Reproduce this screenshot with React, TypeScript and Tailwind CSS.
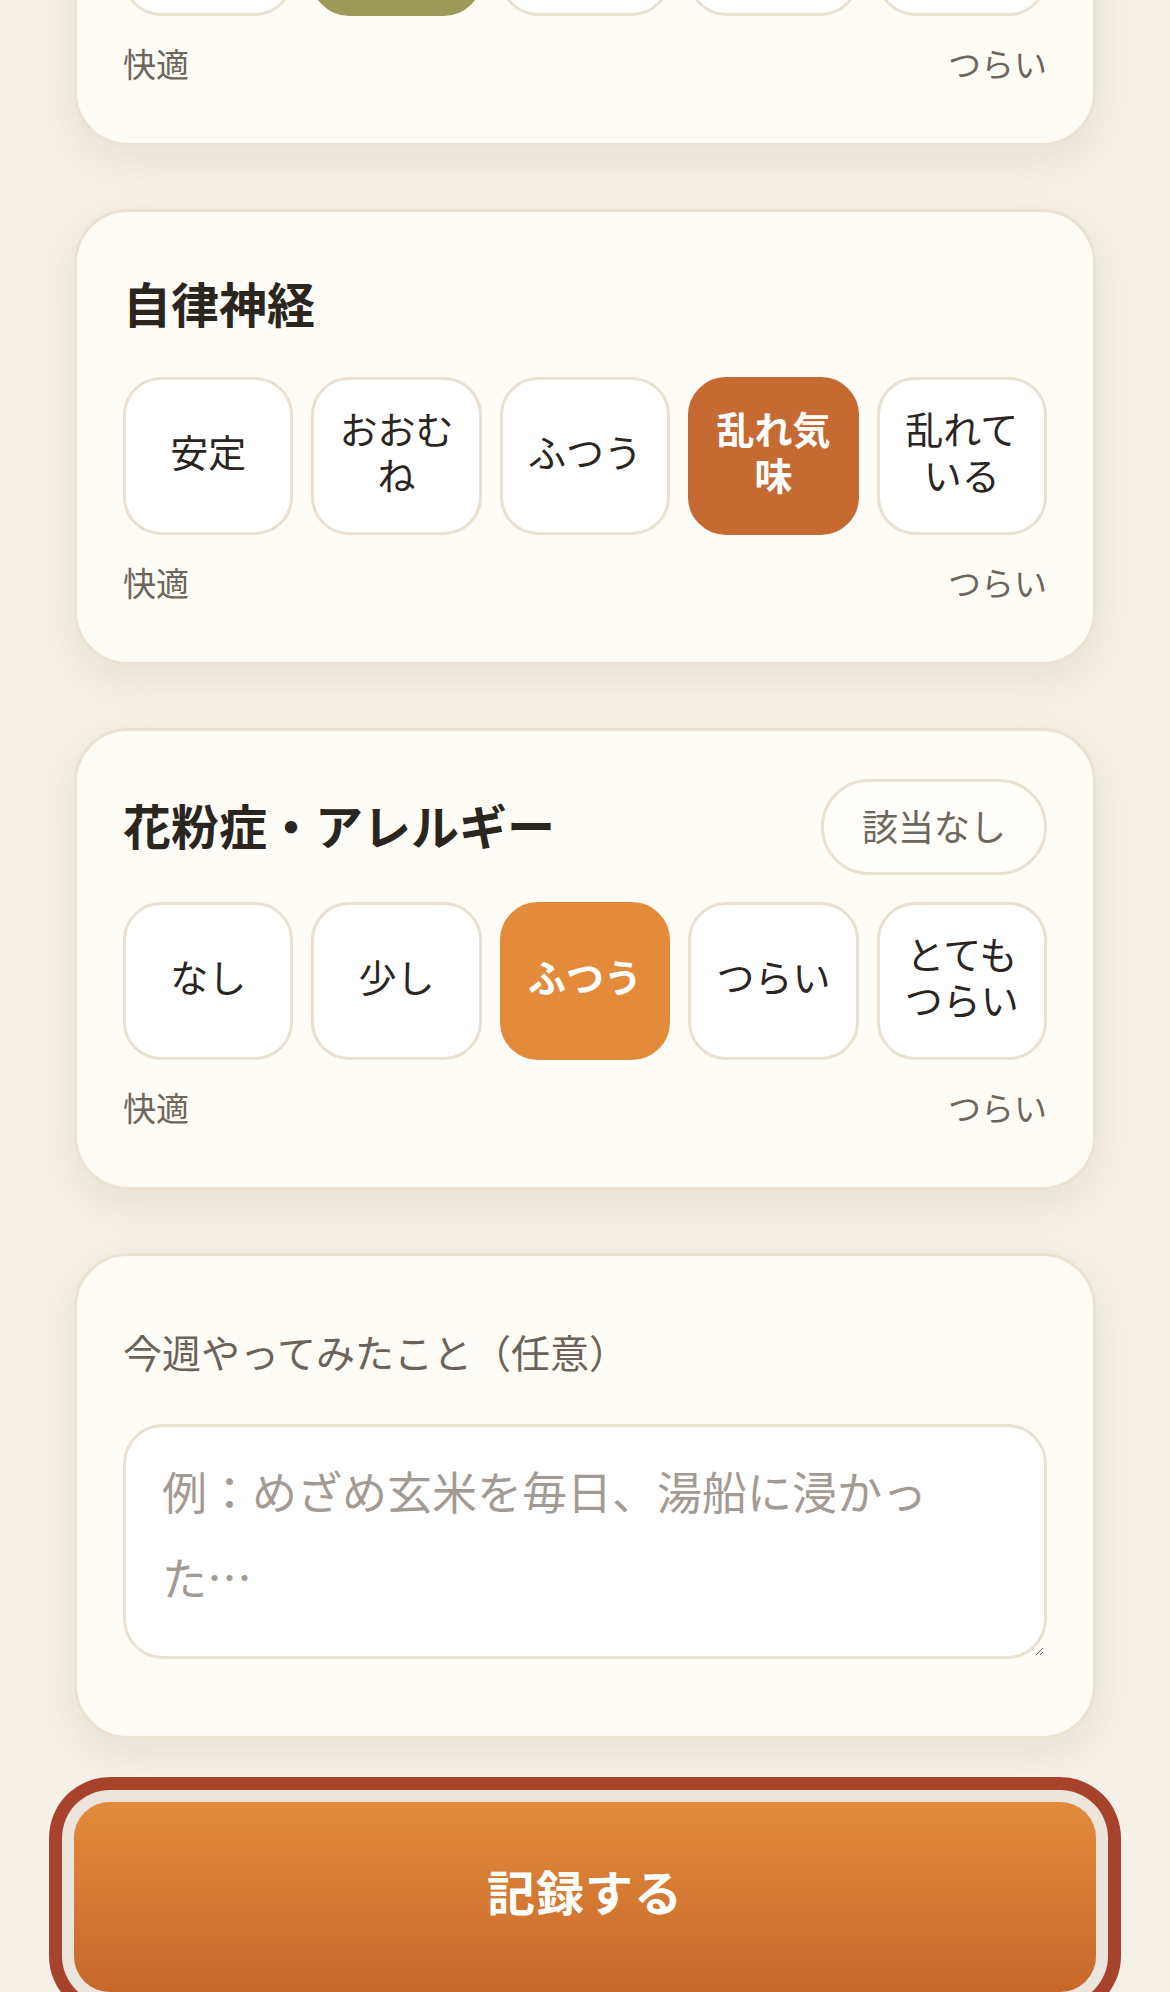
import { useState } from "react";

type Scale = {
  title: string;
  options: string[];
  selected: number;
  activeClass: string;
  noneButton?: boolean;
};

const scales: Scale[] = [
  {
    title: "冷え",
    options: ["なし", "少し", "ふつう", "つらい", "とてもつらい"],
    selected: 1,
    activeClass: "bg-[#9c9a58] border-[#9c9a58] text-white font-bold",
  },
  {
    title: "自律神経",
    options: ["安定", "おおむね", "ふつう", "乱れ気味", "乱れている"],
    selected: 3,
    activeClass: "bg-[#c56a33] border-[#c56a33] text-white font-bold",
  },
  {
    title: "花粉症・アレルギー",
    options: ["なし", "少し", "ふつう", "つらい", "とてもつらい"],
    selected: 2,
    activeClass: "bg-[#e38a3b] border-[#e38a3b] text-white font-bold",
    noneButton: true,
  },
];

function ScaleCard({ scale, first }: { scale: Scale; first?: boolean }) {
  const [selected, setSelected] = useState(scale.selected);

  return (
    <section
      className={`rounded-[54px] border-[3px] border-[#ebe2d3] bg-[#fefcf6] px-[46px] pt-[48px] pb-[56px] shadow-[0_14px_40px_rgba(110,90,60,0.10)] ${
        first ? "-mt-[310px]" : ""
      }`}
    >
      <div className="flex min-h-[90px] items-center justify-between">
        <h2 className="pb-[6px] text-[48px] font-bold leading-none text-[#2a251f]">{scale.title}</h2>
        {scale.noneButton && (
          <button className="h-[96px] rounded-full border-[3px] border-[#e9e0d1] bg-[#fffefa] px-[38px] pb-[4px] text-[36px] text-[#6e665d]">
            該当なし
          </button>
        )}
      </div>
      <div className="mt-[27px] grid grid-cols-5 gap-[18px]">
        {scale.options.map((option, i) => (
          <button
            key={option}
            onClick={() => setSelected(i)}
            className={`flex h-[158px] items-center justify-center rounded-[38px] border-[3px] px-[12px] pb-[10px] text-center text-[38px] leading-[46px] ${
              i === selected ? scale.activeClass : "border-[#e9e0d1] bg-white text-[#2a251f]"
            }`}
          >
            {option}
          </button>
        ))}
      </div>
      <div className="mt-[23px] flex justify-between text-[33px] leading-[48px] text-[#6e665d]">
        <span>快適</span>
        <span>つらい</span>
      </div>
    </section>
  );
}

export default function App() {
  const [note, setNote] = useState("");

  return (
    <div className="h-[1992px] overflow-hidden bg-[#f5f1e8] font-['Noto_Sans_CJK_JP','Noto_Sans',sans-serif]">
      <div className="flex flex-col gap-[63px] px-[74px]">
        {scales.map((scale, i) => (
          <ScaleCard key={scale.title} scale={scale} first={i === 0} />
        ))}

        <section className="rounded-[54px] border-[3px] border-[#ebe2d3] bg-[#fefcf6] px-[46px] pt-[66px] pb-[77px] shadow-[0_14px_40px_rgba(110,90,60,0.10)]">
          <label className="block text-[39px] leading-[58px] text-[#6b6259]">今週やってみたこと（任意）</label>
          <textarea
            value={note}
            onChange={(e) => setNote(e.target.value)}
            placeholder="例：めざめ玄米を毎日、湯船に浸かった…"
            className="mt-[44px] block h-[235px] w-full rounded-[40px] border-[3px] border-[#e9e0d1] bg-white px-[36px] pt-[21px] text-[45px] leading-[86px] text-[#2a251f] outline-none placeholder:text-[#a39b93]"
          />
        </section>

        <button className="flex h-[190px] w-full items-center justify-center rounded-[36px] bg-linear-to-b from-[#e38b3c] to-[#c7682a] pb-[14px] text-[48px] font-bold tracking-[1px] text-white shadow-[0_0_0_12px_#ebe5dc,0_0_0_25px_#a8432b]">
          記録する
        </button>
      </div>
    </div>
  );
}
